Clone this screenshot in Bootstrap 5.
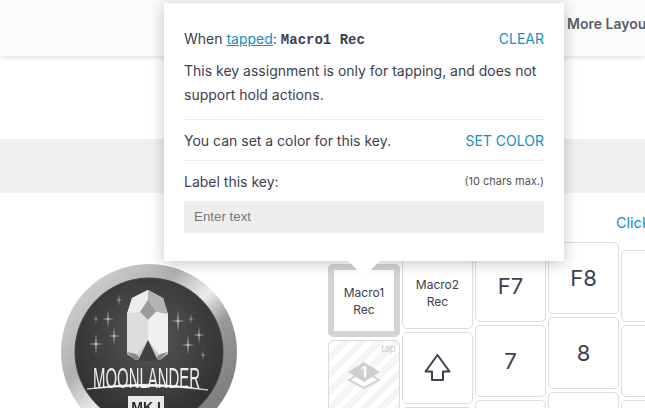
<!DOCTYPE html>
<html lang="en">
<head>
<meta charset="UTF-8">
<meta name="viewport" content="width=device-width, initial-scale=1.0">
<title>Layout key editor</title>
<link href="https://cdn.jsdelivr.net/npm/bootstrap@5.3.2/dist/css/bootstrap.min.css" rel="stylesheet">
<style>
  html, body { height: 408px; overflow: hidden; }
  body { font-family: Inter, "Liberation Sans", sans-serif; font-size: 14px; color: #3d4050; background: #fff; position: relative; }
  .top-bar { height: 56px; background: #fbfbfb; box-shadow: 0 1px 6px rgba(0,0,0,.14); padding: 0 0 10px 567px; white-space: nowrap; }
  .top-bar-item { font-weight: 600; color: #5c5e6c; font-size: 14px; }
  .sub-gap { height: 83px; }
  .grey-band { height: 54px; background: #f0f0f0; }
  .work-area { height: 215px; overflow: hidden; }
  .logo-side { width: 328px; flex: none; padding: 71px 0 0 60px; }
  .logo-svg { filter: blur(.35px); }
  .click-line { height: 49px; padding: 21px 0 0 288px; font-size: 14.5px; line-height: 18px; color: #1190c4; white-space: nowrap; }
  .key-col { width: 71px; margin-right: 2px; flex: none; gap: 3px; }
  .col-a { margin-top: 22px; width: 72px; }
  .col-b { margin-top: 15px; }
  .col-c { margin-top: 8px; }
  .col-e { margin-top: 8px; }
  .kb-key { height: 72px; flex: none; border: 1.5px solid #dcdcdc; border-radius: 5px; background: #fff; line-height: 17px; font-size: 12px; text-align: center; color: #3d4050; position: relative; }
  .kb-big { font-size: 22px; }
  .kb-picked { border: 6px solid #d4d4d4; height: 73px; }
  .kb-striped { background: repeating-linear-gradient(-45deg, #f5f5f5 0 6px, #fff 6px 12px); }
  .tap-tag { position: absolute; top: 0; right: 3px; font-size: 10px; line-height: 14px; color: #cfcfcf; }
  .pop-box { position: absolute; left: 164px; top: 3px; width: 400px; height: 258px; background: #fff; box-shadow: 0 2px 14px rgba(0,0,0,.24); padding: 24px 20px 0; z-index: 5; }
  .pop-box::after { content: ""; position: absolute; left: 184px; bottom: -15px; border-left: 16px solid transparent; border-right: 16px solid transparent; border-top: 15px solid #fff; }
  .pop-head { line-height: 24px; height: 24px; }
  .pop-link { color: #1190c4; font-size: 14px; text-decoration: none; }
  .pop-under { color: #1190c4; }
  .pop-mono { font-family: "Liberation Mono", monospace; font-weight: 700; font-size: 14px; }
  .pop-text { line-height: 24px; margin: 8px 0 0; height: 56px; }
  .pop-row { height: 41px; border-top: 1px solid #ececec; }
  .pop-row-first { margin-top: 4px; }
  .pop-small { font-size: 11px; color: #555; }
  .pop-input { height: 32px; background: #eee; border: 0; border-radius: 0; padding: 0 10px 2px; font-size: 13.33px; font-family: "Liberation Sans", sans-serif; }
  .pop-input::placeholder { color: #777; opacity: 1; }
  .logo-name { font-family: "Liberation Sans", sans-serif; }
</style>
</head>
<body>
  <nav class="top-bar d-flex align-items-center">
    <span class="top-bar-item">More Layouts</span>
  </nav>
  <div class="sub-gap"></div>
  <div class="grey-band"></div>

  <div class="work-area d-flex">
    <div class="logo-side">
      <svg class="logo-svg" width="178" height="178" viewBox="0 0 178 178">
        <defs>
          <linearGradient id="ringg" x1="0" y1="0" x2="1" y2="1">
            <stop offset="0" stop-color="#dedede"/>
            <stop offset=".35" stop-color="#b0b0b0"/>
            <stop offset=".5" stop-color="#ececec"/>
            <stop offset=".62" stop-color="#9a9a9a"/>
            <stop offset="1" stop-color="#6a6a6a"/>
          </linearGradient>
          <radialGradient id="faceg" cx=".5" cy=".4" r=".6">
            <stop offset="0" stop-color="#565656"/>
            <stop offset="1" stop-color="#2f2f2f"/>
          </radialGradient>
          <path id="starp" d="M0-9 L.5-.5 L6 0 L.5 .5 L0 9 L-.5 .5 L-6 0 L-.5-.5Z" fill="#dcdcdc"/>
        </defs>
        <circle cx="89" cy="88" r="88" fill="url(#ringg)"/>
        <circle cx="89" cy="88" r="74" fill="url(#faceg)" stroke="#444"/>
        <use href="#starp" transform="translate(59 36) scale(.7)"/>
        <use href="#starp" transform="translate(48 55)"/>
        <use href="#starp" transform="translate(36 55) scale(.55)"/>
        <use href="#starp" transform="translate(54 72)"/>
        <use href="#starp" transform="translate(36 80) scale(1.2)"/>
        <use href="#starp" transform="translate(118 57) scale(1.2)"/>
        <use href="#starp" transform="translate(131 55) scale(.6)"/>
        <use href="#starp" transform="translate(139 71)"/>
        <use href="#starp" transform="translate(128 81) scale(1.15)"/>
        <use href="#starp" transform="translate(143 91) scale(.6)"/>
        <!-- crystal -->
        <polygon points="88,26 103,34 108,50 108,90 100,96 76,96 67,90 67,50 72,34" fill="#c9c9c9"/>
        <polygon points="88,26 72,34 67,50 80,48 88,36" fill="#ececec"/>
        <polygon points="88,26 103,34 108,50 96,48 88,36" fill="#b4b4b4"/>
        <polygon points="80,48 88,36 96,48 88,56" fill="#9a9a9a"/>
        <polygon points="67,50 80,48 88,56 88,76 76,92 67,88" fill="#dcdcdc"/>
        <polygon points="108,50 96,48 88,56 88,76 100,92 108,88" fill="#f0f0f0"/>
        <polygon points="67,88 76,90 82,96 75,96" fill="#8a8a8a"/>
        <polygon points="108,88 100,90 94,96 100,96" fill="#8a8a8a"/>
        <polygon points="88,76 98,97 78,97" fill="#414141"/>
        <!-- name -->
        <text class="logo-name" x="33" y="124" font-size="30" fill="#ededed" textLength="107" lengthAdjust="spacingAndGlyphs">MOONLANDER</text>
        <path d="M27 125 Q88 115 148 126 Q88 119 27 125Z" fill="#fff" stroke="#fff" stroke-width=".6"/>
        <rect x="68" y="132" width="36" height="22" fill="#e9e9e9"/>
        <text class="logo-name" x="86" y="148" font-size="14" font-weight="700" fill="#2b2b2b" text-anchor="middle">MK I</text>
      </svg>
    </div>
    <div class="flex-grow-1">
      <div class="click-line">Click</div>
      <div class="d-flex">
        <div class="key-col col-a d-flex flex-column">
          <div class="kb-key kb-picked d-flex align-items-center justify-content-center">Macro1<br>Rec</div>
          <div class="kb-key kb-striped d-flex justify-content-center">
            <span class="tap-tag">tap</span>
            <svg class="mt-3" width="34" height="32" viewBox="0 0 34 32">
              <polygon points="17,14 32,23 17,31 2,23" fill="#fff" stroke="#d2d2d2" stroke-width="2"/>
              <polygon points="17,5 33,15 17,25 1,15" fill="#cfcfcf"/>
              <text x="17" y="20" font-family="Inter, sans-serif" font-size="14" font-weight="700" fill="#fff" text-anchor="middle">1</text>
            </svg>
          </div>
        </div>
        <div class="key-col col-b d-flex flex-column">
          <div class="kb-key d-flex align-items-center justify-content-center">Macro2<br>Rec</div>
          <div class="kb-key d-flex align-items-center justify-content-center">
            <svg width="28" height="28" viewBox="0 0 28 28"><path d="M13.5 1 L25.5 17.5 H19 V26 H8 V17.5 H1.5 Z" fill="none" stroke="#3d4050" stroke-width="2" stroke-linejoin="round"/></svg>
          </div>
          <div class="kb-key"></div>
        </div>
        <div class="key-col col-c d-flex flex-column">
          <div class="kb-key kb-big d-flex align-items-center justify-content-center">F7</div>
          <div class="kb-key kb-big d-flex align-items-center justify-content-center">7</div>
          <div class="kb-key"></div>
        </div>
        <div class="key-col d-flex flex-column">
          <div class="kb-key kb-big d-flex align-items-center justify-content-center">F8</div>
          <div class="kb-key kb-big d-flex align-items-center justify-content-center">8</div>
          <div class="kb-key"></div>
        </div>
        <div class="key-col col-e d-flex flex-column">
          <div class="kb-key"></div>
          <div class="kb-key"></div>
          <div class="kb-key"></div>
        </div>
      </div>
    </div>
  </div>

  <div class="pop-box">
    <div class="pop-head d-flex justify-content-between">
      <span>When <a href="#" class="pop-under">tapped</a>: <span class="pop-mono">Macro1 Rec</span></span>
      <a href="#" class="pop-link">CLEAR</a>
    </div>
    <p class="pop-text">This key assignment is only for tapping, and does not support hold actions.</p>
    <div class="pop-row pop-row-first d-flex justify-content-between align-items-center">
      <span>You can set a color for this key.</span>
      <a href="#" class="pop-link">SET COLOR</a>
    </div>
    <div class="pop-row d-flex justify-content-between align-items-center">
      <span>Label this key:</span>
      <span class="pop-small">(10 chars max.)</span>
    </div>
    <input type="text" class="form-control pop-input" placeholder="Enter text">
  </div>
  <script src="https://cdn.jsdelivr.net/npm/bootstrap@5.3.2/dist/js/bootstrap.bundle.min.js"></script>
</body>
</html>
